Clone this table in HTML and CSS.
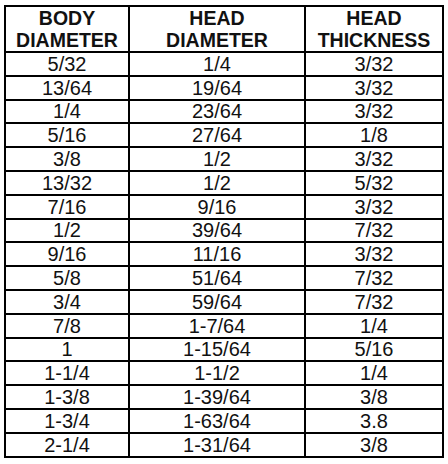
FILE: index.html
```html
<!DOCTYPE html>
<html>
<head>
<meta charset="utf-8">
<link rel="stylesheet" href="styles.css">
</head>
<body>
<table class="spec">
<colgroup><col class="c1"><col class="c2"><col class="c3"></colgroup>
<thead>
<tr><th>BODY<br>DIAMETER</th><th>HEAD<br>DIAMETER</th><th>HEAD<br>THICKNESS</th></tr>
</thead>
<tbody>
<tr><td>5/32</td><td>1/4</td><td>3/32</td></tr>
<tr><td>13/64</td><td>19/64</td><td>3/32</td></tr>
<tr><td>1/4</td><td>23/64</td><td>3/32</td></tr>
<tr><td>5/16</td><td>27/64</td><td>1/8</td></tr>
<tr><td>3/8</td><td>1/2</td><td>3/32</td></tr>
<tr><td>13/32</td><td>1/2</td><td>5/32</td></tr>
<tr><td>7/16</td><td>9/16</td><td>3/32</td></tr>
<tr><td>1/2</td><td>39/64</td><td>7/32</td></tr>
<tr><td>9/16</td><td>11/16</td><td>3/32</td></tr>
<tr><td>5/8</td><td>51/64</td><td>7/32</td></tr>
<tr><td>3/4</td><td>59/64</td><td>7/32</td></tr>
<tr><td>7/8</td><td>1-7/64</td><td>1/4</td></tr>
<tr><td>1</td><td>1-15/64</td><td>5/16</td></tr>
<tr><td>1-1/4</td><td>1-1/2</td><td>1/4</td></tr>
<tr><td>1-3/8</td><td>1-39/64</td><td>3/8</td></tr>
<tr><td>1-3/4</td><td>1-63/64</td><td>3.8</td></tr>
<tr><td>2-1/4</td><td>1-31/64</td><td>3/8</td></tr>
</tbody>
</table>
</body>
</html>
```
FILE: styles.css
```css
html, body {
  margin: 0;
  padding: 0;
  background: #fff;
}
body {
  padding: 5px 0 0 4px;
  font-family: "Liberation Sans", Arial, sans-serif;
  color: #111;
}
.spec {
  border-collapse: collapse;
  table-layout: fixed;
  width: 438px;
}
.c1 { width: 124px; }
.c2 { width: 176px; }
.c3 { width: 138px; }
.spec th, .spec td {
  border: 2px solid #000;
  padding: 0;
  text-align: center;
  vertical-align: middle;
}
.spec th {
  height: 44px;
  font-size: 19.5px;
  font-weight: bold;
  line-height: 22px;
}
.spec td {
  height: 21.8px;
  font-size: 20px;
  line-height: 20px;
}
```
